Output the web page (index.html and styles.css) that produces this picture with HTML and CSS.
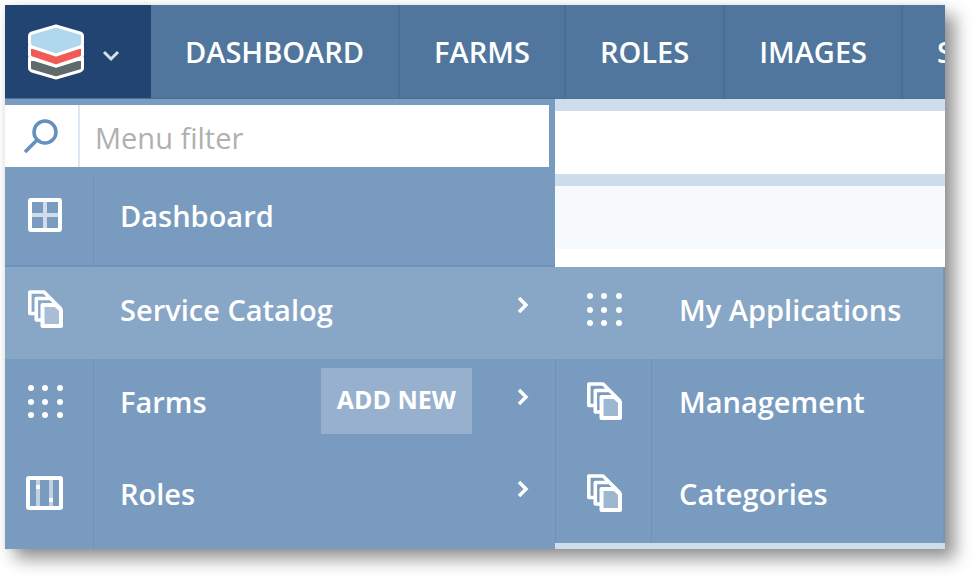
FILE: index.html
```html
<!DOCTYPE html>
<html lang="en">
<head>
<meta charset="utf-8">
<title>Dashboard</title>
<link rel="stylesheet" href="styles.css">
</head>
<body>
<svg class="symbols" aria-hidden="true">
  <symbol id="icon-copies" viewBox="0 0 38 40">
    <path d="M8 24.500H2.800V3H17L34 20M14 31H9.300V9.500H24" fill="none" stroke="currentColor" stroke-width="3.600" stroke-linejoin="round"/>
    <path d="M15.500 16H28.500L34 21V37H15.500Z" fill="#fff" fill-opacity=".28" stroke="currentColor" stroke-width="4" stroke-linejoin="round"/>
  </symbol>
  <symbol id="icon-dots" viewBox="0 0 38 40">
    <g fill="currentColor">
      <circle cx="4" cy="7" r="3"/><circle cx="18" cy="7" r="3"/><circle cx="33" cy="7" r="3"/>
      <circle cx="4" cy="21" r="3"/><circle cx="18" cy="21" r="3"/><circle cx="33" cy="21" r="3"/>
      <circle cx="4" cy="34" r="3"/><circle cx="18" cy="34" r="3"/><circle cx="33" cy="34" r="3"/>
    </g>
  </symbol>
  <symbol id="icon-next" viewBox="0 0 12 18">
    <path d="M2 2 9 9 2 16" fill="none" stroke="currentColor" stroke-width="3.500"/>
  </symbol>
</svg>

<div class="app">
  <header class="topbar">
    <button class="brand" type="button" aria-label="Main menu">
      <svg class="logo" viewBox="0 0 56 56" aria-hidden="true">
        <g stroke="#fff" stroke-width="3" stroke-linejoin="round">
          <path d="M1.500 34 28 42 54.500 34V44Q54.500 46 52 47L28 54 4 47Q1.500 46 1.500 44Z" fill="#5f6b6b"/>
          <path d="M1.500 22 28 30 54.500 22V31Q54.500 33 52 34L28 42 4 34Q1.500 33 1.500 31Z" fill="#f15b55"/>
          <path d="M28 2 52 9Q54.500 10 54.500 12V19Q54.500 22 52 23L28 31 4 23Q1.500 22 1.500 19V12Q1.500 10 4 9Z" fill="#afd8ef"/>
        </g>
      </svg>
      <svg class="caret" viewBox="0 0 18 12" aria-hidden="true"><path d="M2 2 9 9 16 2" fill="none" stroke="currentColor" stroke-width="3"/></svg>
    </button>
    <nav class="tabs">
      <a href="#dashboard">DASHBOARD</a>
      <a href="#farms">FARMS</a>
      <a href="#roles">ROLES</a>
      <a href="#images">IMAGES</a>
      <a href="#s">S</a>
    </nav>
  </header>

  <div class="main">
    <nav class="menu">
      <div class="filter">
        <label for="menu-filter" aria-label="Menu filter">
          <svg class="search" viewBox="0 0 36 36" aria-hidden="true"><g fill="none" stroke="currentColor" stroke-width="3.500"><circle cx="22" cy="14" r="11"/><path d="M14 22 2 34"/></g></svg>
        </label>
        <input id="menu-filter" type="text" placeholder="Menu filter">
      </div>
      <ul class="items">
        <li class="item ruled">
          <span class="icon"><svg viewBox="0 0 38 40" aria-hidden="true"><g fill="none" stroke="currentColor"><path d="M18 5V36M3 20H32" stroke-width="4" opacity=".65"/><rect x="3" y="5" width="30" height="30" rx="1" stroke-width="4"/></g></svg></span>
          <a href="#dashboard">Dashboard</a>
        </li>
        <li class="item active">
          <span class="icon"><svg aria-hidden="true"><use href="#icon-copies"/></svg></span>
          <a href="#catalog">Service Catalog</a>
          <svg class="next" aria-hidden="true"><use href="#icon-next"/></svg>
        </li>
        <li class="item">
          <span class="icon"><svg aria-hidden="true"><use href="#icon-dots"/></svg></span>
          <a href="#farms">Farms</a>
          <button class="add" type="button">ADD NEW</button>
          <svg class="next" aria-hidden="true"><use href="#icon-next"/></svg>
        </li>
        <li class="item">
          <span class="icon wide"><svg viewBox="0 0 38 40" aria-hidden="true"><g fill="none" stroke="currentColor"><path d="M13 6V34M26 6V34" stroke-width="4" opacity=".55"/><rect x="3" y="5" width="33" height="30" rx="1" stroke-width="4"/></g><path d="M11 12H15V16H11ZM24 25H28V29H24Z" fill="currentColor"/></svg></span>
          <a href="#roles">Roles</a>
          <svg class="next" aria-hidden="true"><use href="#icon-next"/></svg>
        </li>
      </ul>
    </nav>

    <div class="content">
      <div class="panel"></div>
      <div class="panel tinted"></div>
      <ul class="submenu">
        <li class="item active">
          <span class="icon"><svg aria-hidden="true"><use href="#icon-dots"/></svg></span>
          <a href="#applications">My Applications</a>
        </li>
        <li class="item">
          <span class="icon"><svg aria-hidden="true"><use href="#icon-copies"/></svg></span>
          <a href="#management">Management</a>
        </li>
        <li class="item">
          <span class="icon"><svg aria-hidden="true"><use href="#icon-copies"/></svg></span>
          <a href="#categories">Categories</a>
        </li>
      </ul>
    </div>
  </div>
</div>
</body>
</html>
```
FILE: styles.css
```css
* {
  box-sizing: border-box;
}

body {
  margin: 0;
  padding: 5px 29px 29px 5px;
  background: #fff;
  font-family: "Open Sans", "Noto Sans", sans-serif;
  font-size: 29px;
  font-weight: 600;
  color: #fff;
}

a {
  color: inherit;
  text-decoration: none;
}

button,
input {
  border: 0;
  font: inherit;
  color: inherit;
}

ul {
  margin: 0;
  padding: 0;
  list-style: none;
}

.symbols {
  display: none;
}

.app {
  overflow: hidden;
  box-shadow: 10px 10px 16px rgba(0, 0, 0, 0.42), 0 0 6px rgba(0, 0, 0, 0.08);
}

.topbar {
  display: flex;
  height: 94px;
  overflow: hidden;
  background: #50769d;
  border-bottom: 1px solid #4a6f98;
}

.brand {
  display: flex;
  flex: none;
  align-items: center;
  gap: 18px;
  width: 146px;
  padding: 0 0 0 23px;
  background: #224470;
}

.logo {
  width: 56px;
  height: 56px;
}

.caret {
  width: 18px;
  height: 12px;
  margin-top: 8px;
  color: #d8e0ea;
}

.tabs {
  display: flex;
}

.tabs a {
  padding: 0 34px;
  border-right: 2px solid #486e98;
  line-height: 94px;
}

.main {
  display: flex;
}

.menu {
  flex: none;
  width: 550px;
  padding-top: 6px;
  background: #799bbf;
}

.filter {
  display: flex;
  height: 62px;
  margin: 0 6px 6px 0;
  background: #fff;
}

.filter label {
  display: flex;
  align-items: center;
  width: 75px;
  padding-left: 18px;
  border-right: 2px solid #dce7f3;
  color: #6490bd;
}

.search {
  width: 36px;
  height: 36px;
}

.filter input {
  flex: 1;
  min-width: 0;
  padding: 2px 15px 0;
  background: none;
  outline: 0;
  font-weight: 400;
  color: #555;
}

.filter input::placeholder {
  color: #b0b0b0;
  opacity: 1;
}

.items {
  padding-bottom: 6px;
  background: linear-gradient(90deg, transparent 88px, #7093bb 88px 89px, transparent 89px);
}

.item {
  display: flex;
  align-items: center;
  height: 92px;
  padding-bottom: 8px;
}

.item.ruled {
  height: 94px;
  border-bottom: 2px solid #6e93bb;
}

.item.active {
  background: #88a6c6;
}

.icon {
  flex: none;
  width: 115px;
  padding-left: 22px;
}

.icon.wide {
  padding-left: 20px;
}

.icon svg {
  display: block;
  width: 38px;
  height: 40px;
}

.next {
  width: 12px;
  height: 18px;
  margin: 0 26px 8px auto;
}

.add {
  height: 66px;
  margin-left: auto;
  padding: 0 16px 4px;
  background: #96b0ce;
  font-size: 25px;
  font-weight: 700;
}

.add + .next {
  margin-left: 45px;
}

.content {
  flex: 1;
  min-width: 0;
  padding-bottom: 6px;
  background: #cdddeb;
}

.panel {
  height: 63px;
  margin-top: 12px;
  background: #fff;
}

.panel.tinted {
  height: 81px;
  background: #f6fafd;
  border-bottom: 18px solid #fff;
}

.submenu {
  border-right: 2px solid #7396bd;
  background: linear-gradient(90deg, #7093bb 1px, transparent 1px 96px, #7093bb 96px 97px, transparent 97px) #799bbf;
}

.submenu .icon {
  width: 124px;
  padding-left: 31px;
}
```
